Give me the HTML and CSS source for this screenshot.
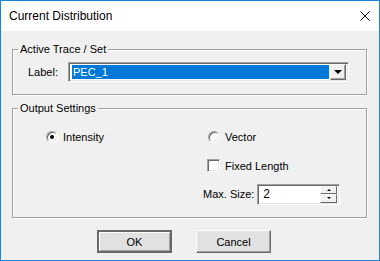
FILE: index.html
```html
<!DOCTYPE html>
<html lang="en">
<head>
  <meta charset="UTF-8">
  <title>Current Distribution</title>
  <link rel="stylesheet" href="styles.css">
</head>
<body>
  <div class="window">
    <div class="titlebar">
      <span class="title">Current Distribution</span>
      <svg class="close" width="10" height="10" viewBox="0 0 10 10">
        <path d="M0.5 0.5 L9.5 9.5 M9.5 0.5 L0.5 9.5" stroke="#000" stroke-width="1" fill="none"/>
      </svg>
    </div>

    <fieldset class="group group-trace">
      <legend>Active Trace / Set</legend>
      <div class="label-row">
        <span class="field-label">Label:</span>
        <div class="combo">
          <span class="combo-value">PEC_1</span>
          <span class="combo-btn"><span class="arrow-down"></span></span>
        </div>
      </div>
    </fieldset>

    <fieldset class="group group-output">
      <legend>Output Settings</legend>
      <div class="options">
        <label class="opt"><span class="radio checked"></span>Intensity</label>
        <label class="opt opt-right"><span class="radio"></span>Vector</label>
        <span></span>
        <label class="opt opt-check"><span class="checkbox"></span>Fixed Length</label>
        <span></span>
        <div class="size-row">
          <span class="size-label">Max. Size:</span>
          <div class="spin">
            <span class="spin-value">2</span>
            <span class="spin-btns">
              <span class="spin-btn"><span class="tiny-up"></span></span>
              <span class="spin-btn"><span class="tiny-down"></span></span>
            </span>
          </div>
        </div>
      </div>
    </fieldset>

    <div class="buttons">
      <button class="btn btn-default">OK</button>
      <button class="btn">Cancel</button>
    </div>
  </div>
</body>
</html>
```

FILE: styles.css
```css
html, body {
  margin: 0;
  padding: 0;
  overflow: hidden;
}
body {
  font-family: "Liberation Sans", Arial, sans-serif;
  font-size: 11px;
  color: #000;
}
.window {
  width: 380px;
  height: 261px;
  box-sizing: border-box;
  border: 1px solid #1883d7;
  background: #f0f0f0;
}
.titlebar {
  height: 30px;
  background: #fff;
  display: flex;
  align-items: center;
  justify-content: space-between;
  padding: 0 9px 0 8px;
}
.title {
  font-family: "Liberation Sans", Arial, sans-serif;
  font-size: 12px;
}
.close {
  display: block;
  margin-top: -1px;
}

.group {
  margin: 0 12px 0 11px;
  padding: 0;
  min-inline-size: 0;
  border: 1px solid #a0a0a0;
  box-shadow: inset 1px 1px #fff, 1px 1px #fff;
}
.group legend {
  padding: 0 2px;
  margin-left: 5px;
  line-height: 13px;
}
.group-trace {
  margin-top: 12px;
}
.group-output {
  margin-top: 7px;
}

.label-row {
  display: flex;
  align-items: center;
  padding: 6px 0 12px 15px;
}
.field-label {
  width: 40px;
}
.combo {
  width: 281px;
  height: 20px;
  box-sizing: border-box;
  border: 1px solid;
  border-color: #a0a0a0 #fff #fff #a0a0a0;
  box-shadow: inset 1px 1px #696969, inset -1px -1px #e3e3e3;
  background: #fff;
  display: flex;
  padding: 2px 2px 2px 3px;
}
.combo-value {
  flex: 1;
  background: #0078d7;
  color: #fff;
  line-height: 14px;
  padding-left: 1px;
  margin: 0 1px 0 0;
}
.combo-btn {
  width: 16px;
  box-sizing: border-box;
  background: #f0f0f0;
  border: 1px solid;
  border-color: #fff #696969 #696969 #fff;
  box-shadow: inset -1px -1px #a0a0a0;
  display: flex;
  align-items: center;
  justify-content: center;
  margin: -1px 0;
}
.arrow-down {
  width: 0;
  height: 0;
  border-left: 4px solid transparent;
  border-right: 4px solid transparent;
  border-top: 4px solid #000;
}

.options {
  display: grid;
  grid-template-columns: 157px 1fr;
  grid-template-rows: 16px 16px 21px;
  row-gap: 13px;
  padding: 14px 0 9px 33px;
}
.options .size-row {
  margin-top: -7px;
}
.opt {
  display: flex;
  align-items: center;
  gap: 5px;
}
.opt-right {
  padding-left: 5px;
}
.opt-check {
  padding-left: 4px;
  margin-top: -1px;
}
.radio {
  width: 12px;
  height: 12px;
  box-sizing: border-box;
  border-radius: 50%;
  border: 1px solid;
  border-color: #a0a0a0 #fff #fff #a0a0a0;
  box-shadow: inset 1px 1px #696969, inset -1px -1px #e3e3e3;
  background: #fff;
  display: flex;
  align-items: center;
  justify-content: center;
}
.radio.checked::after {
  content: "";
  width: 4px;
  height: 4px;
  border-radius: 50%;
  background: #000;
}
.checkbox {
  width: 13px;
  height: 13px;
  box-sizing: border-box;
  border: 1px solid;
  border-color: #a0a0a0 #fff #fff #a0a0a0;
  box-shadow: inset 1px 1px #696969, inset -1px -1px #e3e3e3;
  background: #fff;
}

.size-row {
  display: flex;
  align-items: center;
  gap: 3px;
}
.spin {
  width: 83px;
  height: 21px;
  box-sizing: border-box;
  border: 1px solid;
  border-color: #a0a0a0 #fff #fff #a0a0a0;
  box-shadow: inset 1px 1px #696969, inset -1px -1px #e3e3e3;
  background: #fff;
  display: flex;
  padding: 1px 2px 1px 2px;
}
.spin-value {
  flex: 1;
  padding-left: 3px;
  font-size: 12px;
  line-height: 17px;
}
.spin-btns {
  width: 17px;
  display: flex;
  flex-direction: column;
}
.spin-btn {
  flex: 1;
  box-sizing: border-box;
  background: #f0f0f0;
  border: 1px solid;
  border-color: #fff #696969 #696969 #fff;
  display: flex;
  align-items: center;
  justify-content: center;
}
.tiny-up {
  border-left: 2px solid transparent;
  border-right: 2px solid transparent;
  border-bottom: 2px solid #000;
}
.tiny-down {
  border-left: 2px solid transparent;
  border-right: 2px solid transparent;
  border-top: 2px solid #000;
}

.buttons {
  display: flex;
  gap: 24px;
  padding: 12px 0 0 96px;
}
.btn {
  width: 75px;
  height: 23px;
  box-sizing: border-box;
  font-family: "Liberation Sans", Arial, sans-serif;
  font-size: 11px;
  color: #000;
  background: #e1e1e1;
  border: 1px solid;
  border-color: #fff #696969 #696969 #fff;
  box-shadow: inset -1px -1px #a0a0a0, inset 1px 1px #e3e3e3;
  padding: 0;
}
.btn-default {
  border: 1px solid #696969;
  box-shadow: inset 1px 1px #696969, inset -1px -1px #696969, inset 2px 2px #fff, inset -2px -2px #a0a0a0;
}
```
